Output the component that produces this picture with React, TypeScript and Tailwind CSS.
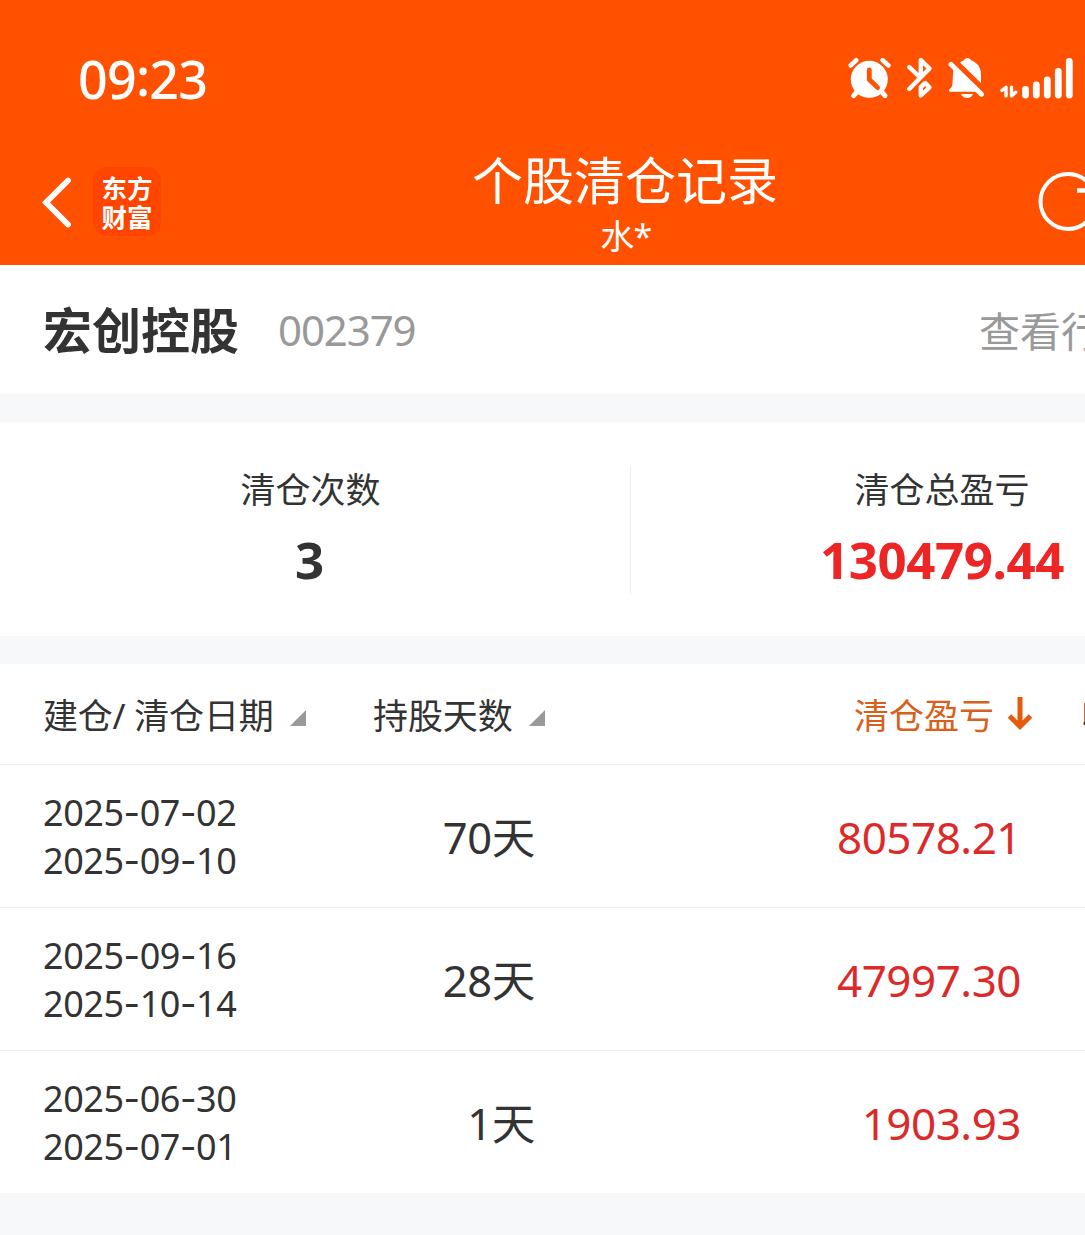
import React from "react";

const ORANGE = "#ff5100";

const trades = [
  { open: "2025-07-02", close: "2025-09-10", days: "70", profit: "80578.21" },
  { open: "2025-09-16", close: "2025-10-14", days: "28", profit: "47997.30" },
  { open: "2025-06-30", close: "2025-07-01", days: "1", profit: "1903.93" },
];

const StatusIcons = () => (
  <div className="flex items-start">
    {/* Alarm */}
    <svg width="44" height="44" viewBox="0 0 44 44" fill="none" stroke="#fff" strokeLinecap="round" strokeLinejoin="round">
      <circle cx="21.3" cy="23.3" r="18.5" fill="#fff" stroke="none" />
      <path d="M2.7 9.4L8.2 4.3M34.6 4.3L40.4 9.4" strokeWidth="4.6" />
      <path d="M5.7 39.6L10 35M37 39.6L32.8 35" strokeWidth="5" />
      <path d="M21.3 14V23.5L29.6 31.6" stroke={ORANGE} strokeWidth="4.8" />
    </svg>
    {/* Bluetooth */}
    <svg className="ml-[13px]" width="30" height="44" viewBox="0 0 30 44" fill="none" stroke="#fff" strokeWidth="4.400" strokeLinecap="round" strokeLinejoin="round">
      <path d="M4.200 11L14.500 21M4.200 33L24.500 12.500L15.800 4V19" />
      <path d="M15.800 39.500L24.500 31.500L20.300 27L15.800 31Z" />
    </svg>
    {/* Muted bell */}
    <svg className="ml-[12px]" width="38" height="44" viewBox="0 0 38 44" fill="#fff">
      <path d="M6.500 11L31 35.800H3.500C1.500 35.800 1.500 33 3.500 32.500C5 31 5.500 29 5.500 26Z" />
      <path d="M13 6.500C14.500 5.200 15.500 4.700 17 4.200C18.500 1.300 22.500 1.300 24 4.200C31 6.800 34 12 34 18V27Z" />
      <path d="M14 38H26C24.500 43.300 15.500 43.300 14 38Z" />
      <path d="M4 8.500L34.500 38.300" fill="none" stroke="#fff" strokeWidth="5" strokeLinecap="round" />
    </svg>
    {/* Signal */}
    <svg className="ml-[15px]" width="75" height="44" viewBox="0 0 75 44" fill="none" stroke="#fff" strokeLinecap="round">
      <path d="M1.900 34.500L6 31.200V40M11.500 31.200V40L15.700 36.200" strokeWidth="3.400" strokeLinejoin="round" />
      <path d="M25.500 33.300V39M36.300 29V39M47.300 24V39M58.300 15.500V39M69.300 5.500V39" strokeWidth="6.800" />
    </svg>
  </div>
);

const SortMark = () => (
  <svg className="mt-[3px]" width="16" height="16" viewBox="0 0 16 16" fill="#999">
    <path d="M16 0V16H0Z" />
  </svg>
);

const DateText = ({ value }: { value: string }) => {
  const [y, m, d] = value.split("-");
  return (
    <p className="text-[36px] leading-[47px] tracking-[-0.45px]">
      {y}<span className="font-[Inter]">-</span>{m}<span className="font-[Inter]">-</span>{d}
    </p>
  );
};

const App = () => {
  return (
    <div className="w-full h-[1235px] overflow-hidden bg-[#f7f8fa] text-[#333] font-['Noto_Sans','Noto_Sans_CJK_SC',sans-serif]">
      <div className="w-[1260px]">
        {/* Header */}
        <header className="h-[265px] bg-[#ff5100] text-white">
          <div className="flex h-[140px] pt-[56px] pl-[78px]">
            <span className="-mt-px w-[770px] text-[52px] leading-[48px] font-medium tracking-[-0.8px]">
              09<span className="relative -top-[3px]">:</span>23
            </span>
            <StatusIcons />
          </div>
          <div className="flex h-[125px]">
            <div className="flex w-[400px] pt-[27px] pl-[40px]">
              <svg className="mt-[9px]" width="34" height="54" viewBox="0 0 34 54" fill="none" stroke="#fff" strokeWidth="5.800" strokeLinecap="round" strokeLinejoin="miter">
                <path d="M28 4.500L6 26.500L28 48.500" />
              </svg>
              <div className="ml-[19px] w-[68px] h-[69px] rounded-[14px] bg-[#ff4500] pt-[7px] text-center text-[25.500px] leading-[29px] font-bold">
                <p>东方</p>
                <p>财富</p>
              </div>
            </div>
            <div className="w-[450px] text-center">
              <h1 className="pt-[9px] text-[51px] leading-[62px]">个股清仓记录</h1>
              <p className="pl-[2px] text-[34px] leading-[50px] tracking-[-0.5px]">水*</p>
            </div>
            <svg className="mt-[30px] ml-[187px]" width="64" height="64" viewBox="0 0 64 64" fill="none" stroke="#fff" strokeWidth="4">
              <circle cx="31" cy="31.500" r="27.500" />
              <path d="M40 20.500H60" strokeWidth="4.500" />
            </svg>
          </div>
        </header>

        {/* Stock */}
        <section className="flex h-[129px] items-center bg-white pl-[43px]">
          <h2 className="w-[235px] text-[49px] leading-[60px] font-bold">宏创控股</h2>
          <span className="w-[701px] text-[42px] leading-[60px] tracking-[-1.1px] text-[#999]">002379</span>
          <span className="pt-[3px] text-[41px] leading-[60px] text-[#999] whitespace-nowrap">查看行情</span>
        </section>

        {/* Summary */}
        <section className="mt-[28px] flex h-[214px] bg-white pt-[44px]">
          <div className="w-[630px] pr-[9px] text-center">
            <p className="text-[35px] leading-[48px]">清仓次数</p>
            <p className="mt-[10px] pr-[2px] text-[51px] leading-[70px] font-bold">3</p>
          </div>
          <div className="-mt-px h-[129px] w-px bg-[#eee]" />
          <div className="w-[622px] text-center">
            <p className="text-[35px] leading-[48px]">清仓总盈亏</p>
            <p className="mt-[10px] text-[51px] leading-[70px] font-bold tracking-[-0.4px] text-[#ee2525]">130479.44</p>
          </div>
        </section>

        {/* Records */}
        <section className="mt-[28px] bg-white">
          <div className="flex h-[101px] items-center border-b border-[#eee] pt-[4px] pl-[43px] text-[35px] whitespace-nowrap">
            <div className="flex w-[330px] items-center gap-[16px] tracking-[-0.2px]">建仓/ 清仓日期 <SortMark /></div>
            <div className="flex w-[481px] items-center gap-[16px] tracking-[-0.1px]">持股天数 <SortMark /></div>
            <div className="flex w-[227px] items-center gap-[13px] text-[#d9601a]">
              清仓盈亏
              <svg className="-mt-[4px]" width="26" height="36" viewBox="0 0 26 36" fill="none" stroke="#e65a0c" strokeWidth="5">
                <path d="M13 1V30M2.500 20L13 30.500L23.500 20" />
              </svg>
            </div>
            <div>收益率</div>
          </div>
          {trades.map((t) => (
            <div key={t.open} className="flex h-[143px] items-center border-b border-[#eee] pt-px pl-[43px] last:h-[142px] last:border-b-0">
              <div className="w-[292px] pt-px">
                <DateText value={t.open} />
                <DateText value={t.close} />
              </div>
              <p className="w-[200px] text-right text-[43.500px] leading-[60px] tracking-[-0.3px]">{t.days}天</p>
              <p className="w-[486px] text-right text-[44px] leading-[60px] tracking-[-0.5px] text-[#dc2a2a]">{t.profit}</p>
            </div>
          ))}
        </section>
      </div>
    </div>
  );
};

export default App;
